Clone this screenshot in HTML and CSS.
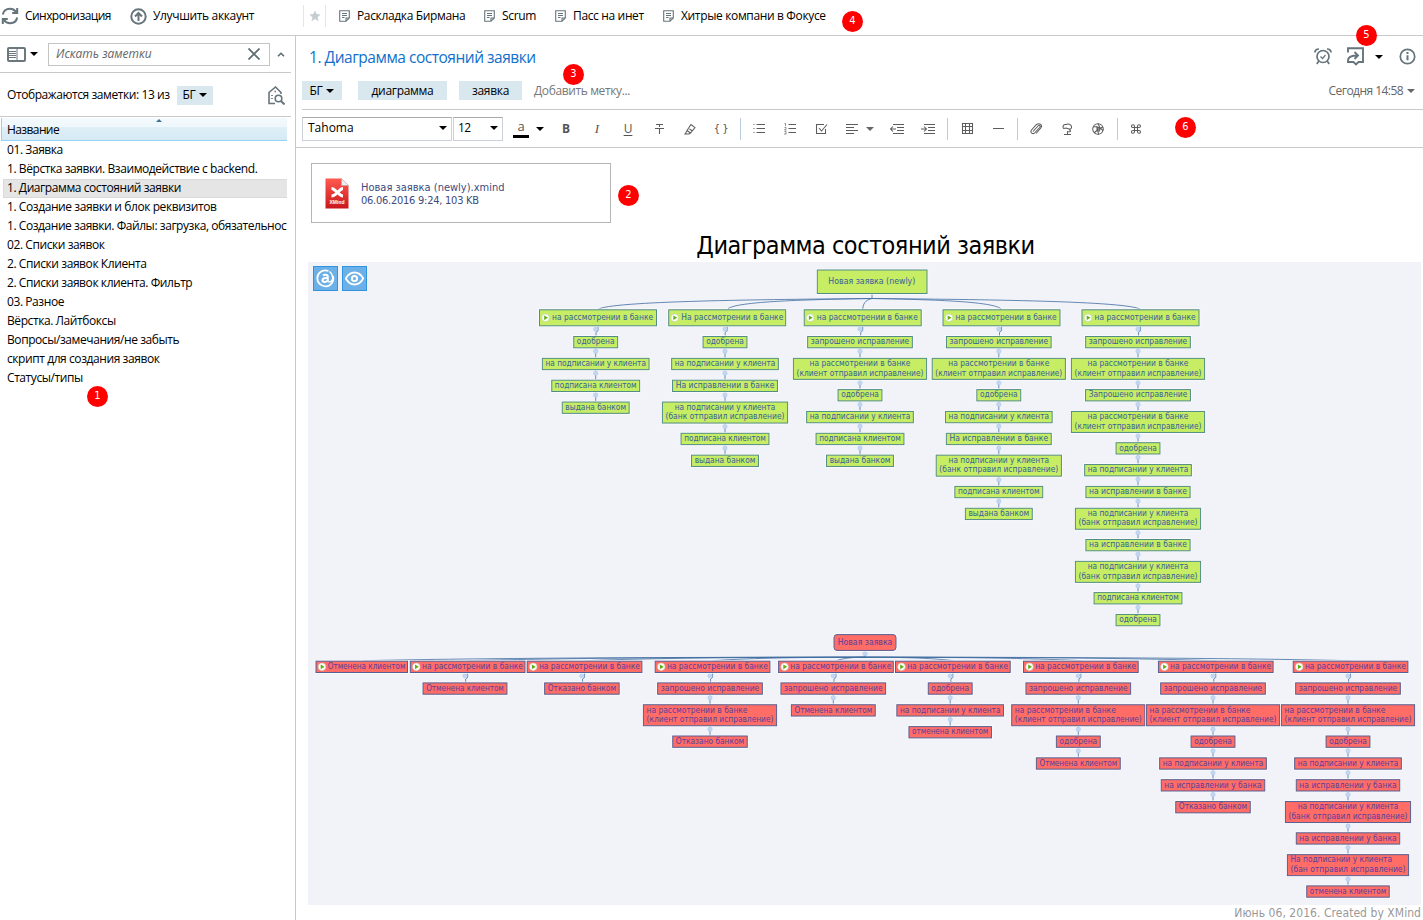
FILE: index.html
```
<!DOCTYPE html>
<html lang="ru">
<head>
<meta charset="utf-8">
<title>Заметки</title>
<link rel="stylesheet" href="styles.css">
</head>
<body>
<div class="app">
  <header class="topbar">
    <div class="account">
      <svg class="ico sync" width="18" height="18" viewBox="0 0 18 18"><path d="M1.8 7.5C2.5 3.8 5.500 1.800 9 1.800c2.500 0 4.500 1 6 3M16.200 1v5h-5M16.200 10.500c-.7 3.700-3.700 5.700-7.200 5.700-2.500 0-4.500-1-6-3M1.800 17v-5h5"/></svg>
      <span class="t-sync">Синхронизация</span>
      <svg class="ico up" width="17" height="17" viewBox="0 0 17 17"><circle cx="8.500" cy="8.500" r="7.200"/><path d="M8.500 13V5.500M5 8.500l3.500-3.500L12 8.500"/></svg>
      <span class="t-up">Улучшить аккаунт</span>
    </div>
    <nav class="shortcuts">
      <span class="star"><svg width="12" height="12" viewBox="0 0 12 12"><path fill="#c6cdd1" d="M6 .4l1.600 3.700 4 .4-3 2.700.9 4L6 9.100l-3.500 2.100.9-4-3-2.700 4-.4z"/></svg></span>
      <a class="s1"><svg class="note" width="11" height="12" viewBox="0 0 11 12"><path d="M.7.7h9.600v7.300L7 11.300H.7zM7 11V8h3M3 3.500h5M3 5.500h5M3 7.500h2.500"/></svg><span>Раскладка Бирмана</span></a>
      <a class="s2"><svg class="note" width="11" height="12" viewBox="0 0 11 12"><path d="M.7.7h9.600v7.300L7 11.300H.7zM7 11V8h3M3 3.500h5M3 5.500h5M3 7.500h2.500"/></svg><span>Scrum</span></a>
      <a class="s3"><svg class="note" width="11" height="12" viewBox="0 0 11 12"><path d="M.7.7h9.600v7.300L7 11.300H.7zM7 11V8h3M3 3.500h5M3 5.500h5M3 7.500h2.500"/></svg><span>Пасс на инет</span></a>
      <a class="s4"><svg class="note" width="11" height="12" viewBox="0 0 11 12"><path d="M.7.7h9.600v7.300L7 11.300H.7zM7 11V8h3M3 3.500h5M3 5.500h5M3 7.500h2.500"/></svg><span>Хитрые компани в Фокусе</span></a>
    </nav>
  </header>

  <div class="columns">
    <aside class="sidebar">
      <div class="searchrow">
        <svg class="layout" width="19" height="15" viewBox="0 0 19 15"><rect x="1" y="1" width="17" height="13" rx="1" fill="#fff" stroke="#6b787e" stroke-width="2"/><path d="M10 1v13M2 4.500h7M2 6.500h7M2 8.500h7M2 10.500h7" stroke="#6b787e" fill="none"/></svg>
        <i class="caret"></i>
        <div class="search"><span>Искать заметки</span><svg width="12" height="12" viewBox="0 0 12 12"><path d="M.5.500l11 11M11.500.500l-11 11" stroke="#5e6c72" stroke-width="1.700"/></svg></div>
        <svg class="chev" width="8" height="5" viewBox="0 0 8 5"><path d="M1 4.300l3-3 3 3" fill="none" stroke="#5e6c72" stroke-width="1.600"/></svg>
      </div>
      <div class="filter">
        <span class="count">Отображаются заметки: 13 из</span>
        <span class="chip chip-bg"><b>БГ</b><i class="caret"></i></span>
        <svg class="ico tagsearch" width="17" height="19" viewBox="0 0 17 19"><path stroke-width="1.600" d="M7 17.500H1V6.500L7.500 1 13 6.500V8M4 9v1M4 12v1M6.500 5.500h1.500"/><circle cx="10.500" cy="12.500" r="3.300" stroke-width="1.600"/><path d="M13 15l3.500 3.500"/></svg>
      </div>
      <div class="listhead"><span>Название</span><i></i></div>
      <ul class="notes">
        <li>01. Заявка</li>
        <li class="n2">1. Вёрстка заявки. Взаимодействие с backend.</li>
        <li class="selected">1. Диаграмма состояний заявки</li>
        <li>1. Создание заявки и блок реквизитов</li>
        <li class="n5">1. Создание заявки. Файлы: загрузка, обязательнос</li>
        <li>02. Списки заявок</li>
        <li>2. Списки заявок Клиента</li>
        <li>2. Списки заявок клиента. Фильтр</li>
        <li>03. Разное</li>
        <li>Вёрстка. Лайтбоксы</li>
        <li>Вопросы/замечания/не забыть</li>
        <li>скрипт для создания заявок</li>
        <li>Статусы/типы</li>
      </ul>
    </aside>

    <main class="main">
      <div class="titlebar">
        <h1>1. Диаграмма состояний заявки</h1>
        <div class="actions">
          <svg class="ico alarm" width="18" height="17" viewBox="0 0 18 17"><circle cx="9" cy="8.500" r="6" stroke-width="1.700"/><path stroke-width="1.700" d="M.9 4.500C1 2 3 .9 5 1M17.100 4.500C17 2 15 .9 13 1M4.800 13l-2 3M13.200 13l2 3"/><path stroke-width="1.200" d="M6.500 8.500l2 2 3-3.500"/></svg>
          <svg class="ico share" width="17" height="19" viewBox="0 0 17 19"><path stroke-width="1.900" d="M1 5.500V1.200h15V15h-4.500L9 17.500 6.500 15H1v-1.500C1 10 4 8.500 10.500 8.500M7.500 5l3.500 3.500L7.500 12"/></svg>
          <i class="caret"></i>
          <svg class="ico info" width="17" height="17" viewBox="0 0 17 17"><circle cx="8.500" cy="8.500" r="7.200" stroke-width="1.700"/><path d="M8.500 7.300v5M8.500 4v2"/></svg>
        </div>
      </div>
      <div class="tags">
        <span class="chip chip-bg"><b>БГ</b><i class="caret"></i></span>
        <span class="chip chip-d"><b>диаграмма</b></span>
        <span class="chip chip-z"><b>заявка</b></span>
        <span class="addtag">Добавить метку...</span>
        <span class="date">Сегодня 14:58</span><i class="caret gray"></i>
      </div>
      <div class="toolbar">
        <div class="select font"><span>Tahoma</span><i class="caret"></i></div>
        <div class="select size"><span>12</span><i class="caret"></i></div>
        <span class="color">a</span><i class="caret colorcaret"></i>
        <span class="tool bold">B</span>
        <span class="tool italic">I</span>
        <span class="tool under">U</span>
        <span class="tool"><svg width="11" height="11"><path d="M2 1.500h7M1 5.500h9M5.500 1.500V4M5.500 6v5"/></svg></span>
        <span class="tool"><svg width="12" height="12"><path d="M3 7.500L7 1.500l4 3-4.500 5.500zM3 7.500l3.500 2.500M5.500 6l3 2M3 8L1 11h4l1.500-1"/></svg></span>
        <span class="tool braces">{ }</span>
        <i class="sep"></i>
        <span class="tool"><svg width="12" height="10"><path d="M3.500 .500H12M3.500 4.500H12M3.500 8.500H12M.5 .500h1M.5 4.500h1M.5 8.500h1"/></svg></span>
        <span class="tool"><svg width="12" height="12"><path d="M4.500 1.500H12M4.500 5.500H12M4.500 9.500H12"/><path class="thin" d="M.5 .500h1v2.500M.5 4.500h1.500v1L.5 7h2M.5 8.500h1.500v2.500h-2"/></svg></span>
        <span class="tool"><svg width="13" height="12"><path d="M9 1.500H1.500v9h9V6M4 5l2.500 3L12 1.500"/></svg></span>
        <span class="tool align"><svg width="12" height="10"><path d="M0 .500h12M0 3.500h8M0 6.500h12M0 9.500h8"/></svg><i class="caret gray"></i></span>
        <span class="tool"><svg width="14" height="10"><path d="M3 .500h11M7 3.500h7M7 6.500h7M3 9.500h11M.5 5H6M3 2.500L.5 5 3 7.500"/></svg></span>
        <span class="tool"><svg width="14" height="10"><path d="M3 .500h11M7 3.500h7M7 6.500h7M3 9.500h11M0 5h5.500M3 2.500L5.500 5 3 7.500"/></svg></span>
        <i class="sep wide"></i>
        <span class="tool"><svg width="11" height="11"><path d="M.5.500h10v10H.5zM3.500.500v10M7.500.500v10M.5 3.500h10M.5 7.500h10"/></svg></span>
        <span class="tool"><svg width="11" height="3"><path d="M0 1.500h11"/></svg></span>
        <i class="sep"></i>
        <span class="tool"><svg width="12" height="12"><path d="M3 8.500L8 3c1.500-1.500 3 0 1.700 1.500L5 9.500C3 12-.5 9.500 1.500 7l5-5.500C9.500-.5 13 2 10.800 5L6 10.500"/></svg></span>
        <span class="tool"><svg width="11" height="12"><path d="M1.500 5.500C0 3 2 1 4 1.500c2-1 5-.5 5.500 2 .5 2-1 3-2.500 2.500L4 5 1.500 5.500M7 6l1.500 2c0 1-2 1-3.500.5M5.500 9v2.500M2 11.500h7"/></svg></span>
        <span class="tool"><svg width="12" height="12"><circle cx="6" cy="6" r="5.300"/><path d="M6 .5L8 5l3 2.500M11 4L6.500 6 2 10M1 4l4-.5L6 8l.5 3.500M5 4l3 1-.5 3H5z"/></svg></span>
        <i class="sep"></i>
        <span class="tool"><svg width="10" height="10"><path d="M3.500 3.500h3v3h-3zM3.500 3.500H2C0 3.500 0 .700 2 .700c1 0 1.500.8 1.500 1.500zM6.500 3.500H8C10 3.500 10 .700 8 .700c-1 0-1.500.8-1.500 1.500zM3.500 6.500H2C0 6.500 0 9.300 2 9.300c1 0 1.500-.8 1.500-1.500zM6.500 6.500H8c2 0 2 2.800 0 2.800-1 0-1.500-.8-1.500-1.500z"/></svg></span>
      </div>

      <article class="note-body">
        <div class="attachment">
          <svg width="24" height="31" viewBox="0 0 24 31"><defs><linearGradient id="xm" x2="0" y2="1"><stop stop-color="#ff5a50"/><stop offset="1" stop-color="#c8171c"/></linearGradient></defs><path d="M.5.500h16l7 7v23H.5z" fill="url(#xm)"/><path d="M16.500.500v7h7z" fill="#eee" stroke="#aaa" stroke-width=".5"/><path d="M6.500 10.500c2 0 4 2 6 4s3.500 3.500 5.500 3.500M18 10.500c-2 0-3.500 2-5.500 4s-4 3.500-6 3.500" fill="none" stroke="#fff" stroke-width="3"/><text x="12" y="25.500" class="xm-label">XMind</text></svg>
          <div class="attinfo"><div>Новая заявка (newly).xmind</div><div class="attmeta">06.06.2016 9:24, 103 KB</div></div>
        </div>
        <h2>Диаграмма состояний заявки</h2>
        <div class="canvas">
          <svg id="map" width="1113" height="643" viewBox="308 262 1113 643"></svg>
          <div class="canvas-tools">
            <span><svg width="19" height="19" viewBox="0 0 19 19"><path d="M12.500 2A8 8 0 1 0 17 7" fill="none" stroke="#fff" stroke-width="1.800"/><path d="M7 6.500c1-1 4.800-1.300 4.800 1.200V13M11.500 9C9 8.800 6.500 9.300 6.500 11.200c0 2.300 4 2.300 5.200 0" fill="none" stroke="#fff" stroke-width="2"/><path d="M13.500 2.500c2.500 2 3.500 4.500 3 8-.5 2-2 2.500-4 2.500" fill="none" stroke="#fff" stroke-width="1.400"/></svg></span>
            <span><svg width="19" height="19" viewBox="0 0 19 19"><path d="M.8 9.500c4.500-8 13-8 17.400 0-4.400 8-12.900 8-17.400 0z" fill="none" stroke="#fff" stroke-width="1.800"/><circle cx="9.500" cy="9.500" r="2.600" fill="none" stroke="#fff" stroke-width="2"/></svg></span>
          </div>
        </div>
        <footer>Июнь 06, 2016. Created by XMind</footer>
      </article>
    </main>
  </div>

  <span class="badge b1">1</span>
  <span class="badge b2">2</span>
  <span class="badge b3">3</span>
  <span class="badge b4">4</span>
  <span class="badge b5">5</span>
  <span class="badge b6">6</span>
</div>
<script src="map.js"></script>
</body>
</html>
```
FILE: styles.css
```
* { box-sizing: border-box; }
html, body { margin: 0; height: 100%; }
body { overflow: hidden; background: #fff; color: #000; font: 12px/16px "Open Sans", "Noto Sans", sans-serif; }
.app { position: relative; width: 1423px; height: 920px; display: flex; flex-direction: column; overflow: hidden; }
svg { flex: none; display: block; }
.ico { fill: none; stroke: #66757c; stroke-width: 2; }
.caret { width: 0; height: 0; border: 4px solid transparent; border-top-color: #000; border-bottom: 0; flex: none; }
.caret.gray { border-top-color: #666; }
span, li, h1, h2, a { white-space: nowrap; }

.topbar { flex: none; height: 36px; display: flex; border-bottom: 1px solid #c9c9c9; padding-bottom: 3px; }
.account { width: 303px; display: flex; align-items: center; padding-left: 1px; }
.t-sync { width: 86px; margin-left: 6px; letter-spacing: -.55px; }
.up { margin-left: 19px; }
.t-up { margin-left: 6px; letter-spacing: -.35px; }
.shortcuts { display: flex; align-items: center; }
.star { width: 23px; height: 22px; display: flex; align-items: center; justify-content: center; border: 1px solid #e6e6e6; border-width: 0 1px; margin-right: 13px; }
.shortcuts a { display: flex; align-items: center; gap: 7px; }
.note { fill: none; stroke: #66757c; stroke-width: 1.100; }
.s1 { width: 145px; letter-spacing: -.35px; }
.s2 { width: 71px; letter-spacing: -.35px; }
.s3 { width: 108px; letter-spacing: -.35px; }
.s4 { letter-spacing: -.35px; }

.columns { flex: 1; display: flex; min-height: 0; }
.sidebar { width: 296px; flex: none; border-right: 1px solid #c9c9c9; }
.searchrow { width: 291px; height: 37px; border-bottom: 1px solid #c9c9c9; display: flex; align-items: center; padding-left: 7px; }
.searchrow > .caret { margin-left: 4px; }
.search { margin-left: 10px; width: 222px; height: 23px; border: 1px solid #c4c4c4; display: flex; align-items: center; justify-content: space-between; padding: 0 9px 0 7px; color: #666; font-style: italic; }
.chev { margin-left: 7px; }
.filter { width: 291px; height: 44px; border-bottom: 1px solid #c9c9c9; display: flex; align-items: center; padding: 1px 0 0 7px; }
.count { width: 170px; letter-spacing: -.42px; }
.chip { height: 19px; background: #d9e7ee; display: flex; align-items: center; justify-content: center; gap: 4px; letter-spacing: -.3px; }
.chip b { font-weight: 400; }
.chip-bg { width: 36px; }
.tagsearch { margin-left: 55px; }
.listhead { width: 286px; height: 23px; margin: 1px 0 0 1px; border-left: 1px solid #8fd3f5; border-bottom: 1px solid #8fd3f5; background: linear-gradient(#f4fafd 0, #eef7fb 40%, #dfeff7 41%, #d6eaf4 100%); padding: 4px 0 0 5px; position: relative; letter-spacing: -.6px; }
.listhead i { position: absolute; left: 154px; top: 1px; border: 3px solid transparent; border-bottom: 3px solid #3f7190; border-top: 0; }
.notes { list-style: none; margin: 0; padding: 0 0 0 3px; width: 287px; }
.notes li { height: 19px; line-height: 18px; padding-left: 4px; letter-spacing: -.42px; }
.notes .n5 { letter-spacing: -.44px; }
.notes .selected { background: #e5e5e5; border: 1px solid #dadada; border-width: 1px 0 1px 1px; line-height: 15px; padding-left: 3px; }

.main { flex: 1; min-width: 0; min-height: 0; display: flex; flex-direction: column; }
.titlebar { flex: none; height: 39px; display: flex; justify-content: space-between; align-items: center; padding: 2px 7px 0 13px; }
h1 { margin: 0; font-size: 15.500px; font-weight: 400; line-height: 20px; color: #1070cc; letter-spacing: -.48px; }
.actions { display: flex; align-items: center; }
.share { margin-left: 15px; }
.actions .caret { margin: 0 16px 0 11px; }
.tags { flex: none; height: 35px; margin-left: 6px; display: flex; align-items: center; padding: 3px 8px 6px 0; border-bottom: 1px solid #c9c9c9; }
.tags .chip-bg { width: 40px; margin-right: 16px; }
.chip-d { width: 89px; margin-right: 12px; }
.chip-z { width: 63px; margin-right: 12px; }
.addtag { color: #777; letter-spacing: -.38px; }
.date { margin-left: auto; margin-right: 4px; color: #666; letter-spacing: -.55px; }
.toolbar { flex: none; height: 38px; border-bottom: 1px solid #c9c9c9; display: flex; align-items: center; padding-left: 6px; }
.select { height: 24px; border: 1px solid #ccd0da; border-top-color: #aaa; display: flex; align-items: center; justify-content: space-between; padding: 0 4px 1px 5px; }
.font { width: 150px; }
.size { width: 50px; margin-left: 1px; padding-left: 4px; letter-spacing: -.5px; }
.color { width: 16px; height: 19px; margin-left: 10px; border-bottom: 3px solid #000; text-align: center; line-height: 14px; font-size: 13px; color: #555; }
.colorcaret { margin: 0 6.500px 0 7px; }
.tool { width: 31px; height: 30px; display: flex; align-items: center; justify-content: center; color: #555; font-size: 12px; flex: none; }
.tool svg { fill: none; stroke: #5c5c5c; stroke-width: 1.050; overflow: visible; }
.thin { stroke-width: .7; }
.bold { font-weight: 700; }
.italic { font: italic 13px "Liberation Serif", serif; }
.under { text-decoration: underline; text-underline-offset: 2px; }
.braces { font: 10px "DejaVu Sans", sans-serif; letter-spacing: -.5px; }
.align { width: 45px; gap: 8px; padding-left: 1px; }
.sep { width: 7px; height: 22px; background: linear-gradient(#bccbdd, #bccbdd) center / 1px 100% no-repeat; flex: none; }
.sep.wide { width: 8px; }

.note-body { flex: 1; min-height: 0; padding: 15px 2px 0 12px; display: flex; flex-direction: column; font-family: "DejaVu Sans Condensed", "DejaVu Sans", sans-serif; }
.attachment { flex: none; width: 300px; height: 60px; margin-left: 3px; border: 1px solid #b5b5b5; display: flex; align-items: center; padding-left: 13px; }
.attinfo { margin-left: 12px; padding-top: 2px; font-size: 11px; line-height: 13px; color: #3d4a80; }
.attmeta { letter-spacing: -.25px; }
.xm-label { font: 700 5px "Liberation Sans", sans-serif; fill: #fff; text-anchor: middle; }
h2 { flex: none; margin: 0; padding: 0 0 0 2px; height: 39px; line-height: 45px; text-align: center; font-size: 25px; font-weight: 400; letter-spacing: -.5px; }
.canvas { flex: none; width: 1113px; height: 643px; background: #f2f3f9; position: relative; }
.canvas-tools { position: absolute; left: 5px; top: 4px; display: flex; gap: 4px; }
.canvas-tools span { width: 25px; height: 25px; background: #6bb0e6; border: 1px solid #3094e0; display: flex; align-items: center; justify-content: center; }
footer { flex: none; height: 15px; text-align: right; font-size: 12px; line-height: 17px; color: #999; letter-spacing: .05px; }

#map { font: 8px "DejaVu Sans", sans-serif; }
#map .edge { fill: none; stroke: #5c83ae; stroke-width: .9; }
#map .trunk { fill: none; stroke: #3f6c9f; stroke-width: .8; }
#map .bubble { fill: #c3d7f2; stroke: #a9c4e8; stroke-width: .5; }
#map .halo { fill: none; stroke: #fff; stroke-width: 2.500; opacity: .8; }
#map .green { fill: #c6ed64; stroke: #528c86; }
#map .red { fill: #ff6d66; stroke: #565f93; }
#map .ink-green { fill: #376199; }
#map .ink-red { fill: #5a3f9c; }

.badge { position: absolute; width: 21px; height: 21px; border-radius: 50%; background: #f00; color: #fff; font: 11px/20px "DejaVu Sans Condensed", sans-serif; text-align: center; }
.b1 { left: 87px; top: 386px; }
.b2 { left: 618px; top: 185px; }
.b3 { left: 563px; top: 64px; }
.b4 { left: 842px; top: 11px; }
.b5 { left: 1356px; top: 25px; }
.b6 { left: 1175px; top: 117px; }
```
FILE: map.js
```
const NS = 'http://www.w3.org/2000/svg';
const map = document.getElementById('map');

function add(tag, attrs, text) {
  const e = document.createElementNS(NS, tag);
  for (const k in attrs) e.setAttribute(k, attrs[k]);
  if (text) e.textContent = text;
  map.appendChild(e);
}

// Text widths of the labels, in pixels.
const W = {
  'одобрена': 37.7, 'на подписании у клиента': 100.5, 'На подписании у клиента': 101.5,
  'подписана клиентом': 81.7, 'выдана банком': 60.7, 'На исправлении в банке': 98.7,
  'на исправлении в банке': 98, 'на исправлении у банка': 97.3,
  '(банк отправил исправление)': 119, '(бан отправил исправление)': 115,
  'запрошено исправление': 98.5, 'Запрошено исправление': 98.7,
  'на рассмотрении в банке': 101, 'На рассмотрении в банке': 102,
  '(клиент отправил исправление)': 127, 'Отменена клиентом': 77.7,
  'отменена клиентом': 76.3, 'Отказано банком': 68.3,
  'Новая заявка (newly)': 87, 'Новая заявка': 54.7
};

function box(kind, x, y, w, h, r) {
  add('rect', { class: 'halo', x, y, width: w, height: h, rx: r || 0 });
  add('rect', { class: kind, x, y, width: w, height: h, rx: r || 0 });
}
function label(kind, x, y, t) {
  add('text', { class: 'ink-' + kind, x, y, textLength: W[t], lengthAdjust: 'spacingAndGlyphs' }, t);
}

const S = {
  o: 'одобрена', p: 'на подписании у клиента', k: 'подписана клиентом', v: 'выдана банком',
  I: 'На исправлении в банке', i: 'на исправлении в банке', u: 'на исправлении у банка',
  z: 'запрошено исправление', Z: 'Запрошено исправление',
  B: 'на подписании у клиента|(банк отправил исправление)',
  N: 'На подписании у клиента|(бан отправил исправление)',
  C: 'на рассмотрении в банке|(клиент отправил исправление)',
  O: 'Отменена клиентом', m: 'отменена клиентом', X: 'Отказано банком'
};

function branch(kind, top, h, start, left, width, cx, head, seq) {
  if (seq) {
    add('path', { class: 'edge', d: `M${left + width / 2} ${top + h}v5l-2 1.500V${start}` });
    add('circle', { class: 'bubble', cx, cy: top + h + 3.3, r: 2.2 });
  }
  box(kind, left, top, width, h);
  const mid = top + h / 2;
  add('circle', { cx: left + 6, cy: mid, r: 3.8, fill: '#fff', stroke: '#b9c9a8', 'stroke-width': .5 });
  add('path', { d: `M${left + 4.7} ${mid - 2.3}l3.800 2.300-3.800 2.300z`, fill: '#5fae12' });
  label(kind, left + (kind === 'green' ? 12.6 : 11.7), mid + 2.3, head);

  let y = start;
  [...seq].forEach((c, i) => {
    const lines = S[c].split('|');
    const double = lines.length === 2;
    const bh = double ? 21 : 11.3;
    const tw = Math.max(...lines.map(l => W[l]));
    if (i < seq.length - 1) {
      add('path', { class: 'edge', d: `M${cx} ${y + bh}v10.500` });
      add('circle', { class: 'bubble', cx, cy: y + bh + 3.5, r: 2.2 });
    }
    box(kind, cx - tw / 2 - 3.1, y, tw + 6.2, bh);
    const alignLeft = kind === 'red' && c !== 'B';
    lines.forEach((l, n) => {
      label(kind, alignLeft ? cx - tw / 2 : cx - W[l] / 2, y + 7.8 + n * 9.4, l);
    });
    y += double ? 31.25 : 21.85;
  });
}

const R = 'на рассмотрении в банке';
const green = [
  [539.5, 595.7, R, 'opkv'],
  [668.7, 725, 'На рассмотрении в банке', 'opIBkv'],
  [804.2, 860, R, 'zCopkv'],
  [943, 998.8, R, 'zCopIBkv'],
  [1082, 1138, R, 'zCZCopiBiBko']
];
const red = [
  [316, 0, 'Отменена клиентом', ''],
  [410.3, 465, R, 'O'],
  [527.2, 581.9, R, 'X'],
  [655.2, 710, R, 'zCX'],
  [778.6, 833.3, R, 'zO'],
  [895.5, 950.2, R, 'opm'],
  [1023.5, 1078.3, R, 'zCoO'],
  [1158.4, 1213, R, 'zCopuX'],
  [1293.2, 1348, R, 'zCopuBuNm']
];

add('path', { class: 'trunk', d: 'M872 293v6' });
green.forEach(g => {
  const x = g[0] + 58.5, d = x - 872;
  add('path', { class: 'trunk', d: `M872 298.500C${872 + d * .4} 299.500 ${x - d * .04} 301 ${x} 309.500` });
});
add('path', { class: 'edge', d: 'M865 650v7' });
add('circle', { class: 'bubble', cx: 865, cy: 653.7, r: 2.2 });
red.forEach(g => {
  const x = g[0] + (g[1] ? 58 : 47), d = x - 865;
  add('path', { class: 'trunk', d: `M865 657.200C${865 + d * .5} 657.200 ${x - d * .2} 658.500 ${x} 660.700` });
});
box('green', 817.3, 270, 109.7, 23.5);
label('green', 828.3, 284.2, 'Новая заявка (newly)');
box('red', 834, 634.6, 62, 15.8, 3);
label('red', 837.7, 644.6, 'Новая заявка');
green.forEach(g => branch('green', 309.8, 16, 336.5, g[0], 117, g[1], g[2], g[3]));
red.forEach(g => branch('red', 661.2, 11.3, 682.9, g[0], g[1] ? 114.7 : 91.5, g[1], g[2], g[3]));
```
